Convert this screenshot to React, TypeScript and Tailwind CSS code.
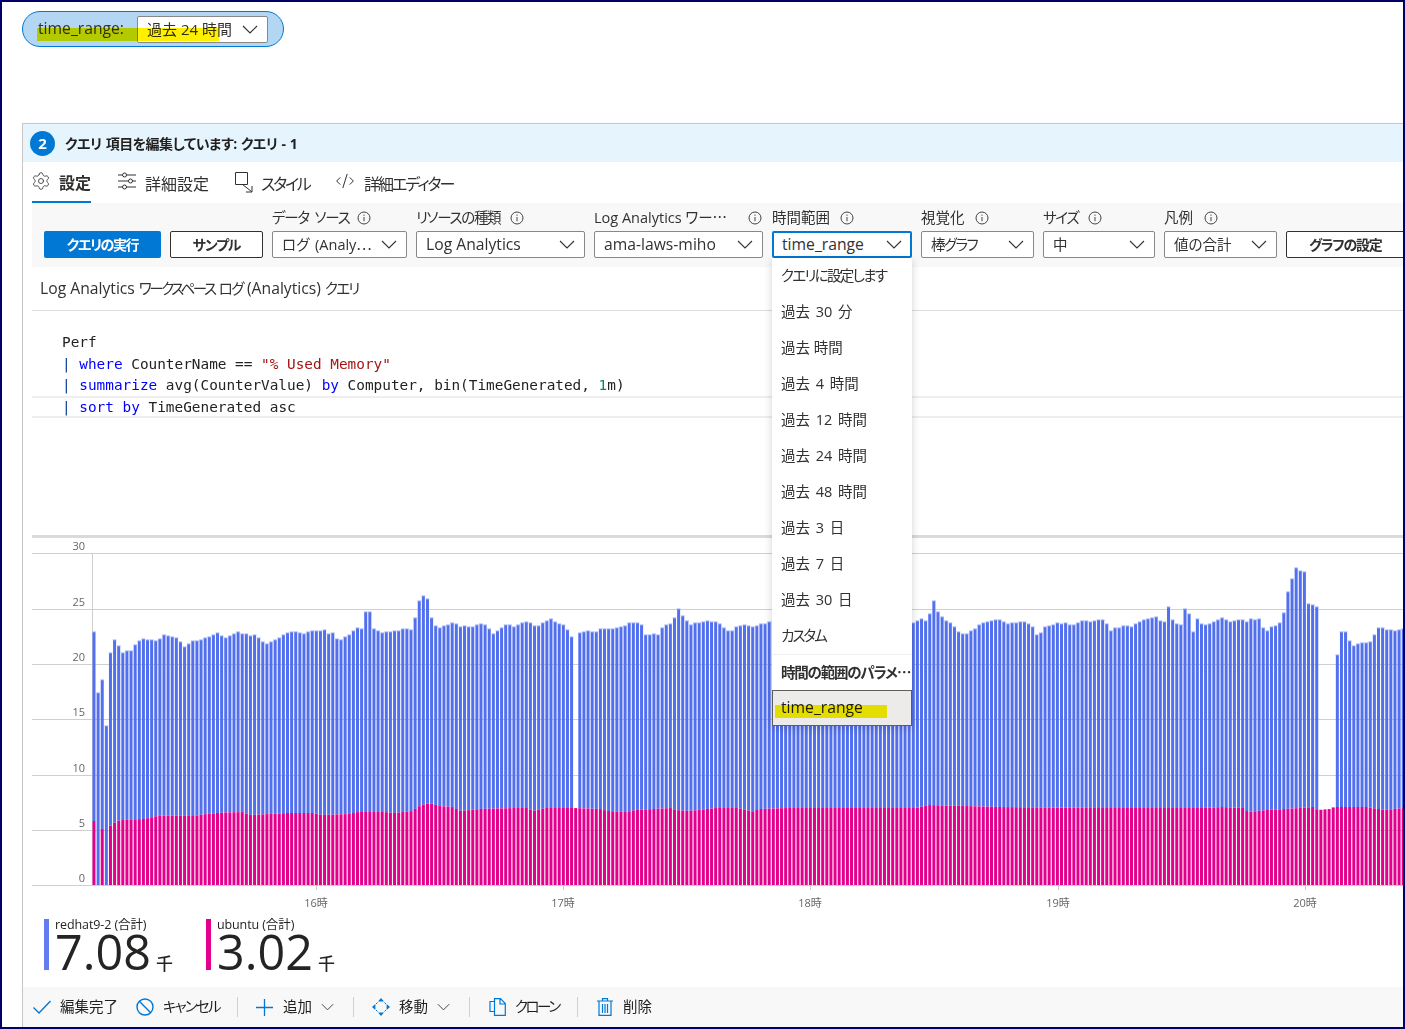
import { Settings, CodeXml } from 'lucide-react';

// bar tops read off the chart, 900 means no blue part for that slot
const BLUE_TOPS = [
  632, 693, 680, 726, 653, 640, 646, 653, 651, 651, 645, 641, 639, 640, 640, 641, 639, 635, 636, 637,
  638, 642, 647, 644, 641, 641, 640, 638, 637, 635, 633, 636, 638, 636, 634, 632, 634, 634, 636, 635,
  638, 642, 644, 642, 640, 638, 635, 633, 632, 632, 633, 634, 632, 631, 631, 631, 630, 634, 633, 639,
  640, 637, 635, 631, 628, 629, 612, 612, 629, 631, 633, 632, 632, 631, 631, 629, 629, 630, 618, 601,
  596, 599, 618, 626, 628, 626, 625, 623, 624, 627, 626, 627, 627, 625, 624, 625, 629, 634, 631, 628,
  625, 625, 627, 625, 623, 622, 623, 626, 626, 623, 621, 619, 622, 624, 625, 630, 637, 900, 633, 632,
  631, 632, 632, 629, 629, 629, 629, 628, 627, 626, 623, 623, 623, 625, 635, 635, 634, 635, 628, 625,
  624, 618, 609, 616, 621, 625, 623, 623, 622, 621, 622, 622, 624, 628, 631, 631, 627, 626, 625, 626,
  627, 626, 624, 624, 622,
  // under the dropdown
  622, 622, 623, 623, 624, 624, 623, 622, 622, 621, 622, 623, 624, 624, 623, 622, 622, 621, 621, 622,
  623, 624, 624, 623, 623, 622, 622, 623, 624, 624, 623, 623, 623, 622,
  623, 621, 619, 621, 614, 601, 612, 617, 621, 623, 627, 632, 634, 634, 631, 629, 625, 623, 622, 621,
  620, 620, 622, 624, 623, 623, 622, 622, 624, 627, 635, 633, 627, 626, 625, 623, 624, 623, 625, 625,
  623, 621, 621, 622, 621, 620, 620, 624, 631, 628, 628, 626, 626, 627, 624, 622, 620, 619, 618, 617,
  621, 622, 607, 620, 624, 625, 609, 614, 632, 619,
  624, 625, 624, 622, 620, 618, 620, 622, 621, 620, 620, 622, 619, 620, 619, 628, 631, 627, 626, 623,
  613, 592, 579, 568, 571, 572, 604, 605, 607, 900, 900, 900, 900, 655, 632, 632, 641, 646, 644, 643,
  643, 642, 635, 628, 628, 630, 630, 631, 630, 629,
];

const PINK_LINE: [number, number][] = [
  [94, 821], [102, 829], [110, 826], [117, 821], [126, 819.5], [144, 819], [157, 816], [166, 815.5], [193, 816],
  [206, 814], [224, 812.5], [242, 812], [251, 815], [269, 814], [287, 813], [313, 813], [322, 815], [349, 814],
  [358, 812], [385, 812], [394, 813], [412, 811], [421, 805], [430, 803], [439, 806], [452, 807], [461, 811],
  [479, 809], [515, 808], [528, 808], [533, 811], [546, 808], [573, 808], [600, 809], [608, 811], [626, 812],
  [635, 810], [671, 808], [676, 810], [689, 811], [698, 810], [716, 808], [738, 808], [747, 810], [752, 811.5],
  [760, 809], [787, 808], [915, 808], [930, 805], [1000, 807], [1100, 808], [1202, 808], [1223, 807], [1243, 808],
  [1248, 812], [1267, 810], [1285, 809], [1313, 807], [1318, 810], [1330, 809], [1334, 807], [1367, 807],
  [1384, 810], [1404, 808],
];

const GRID_LINES = [
  { y: 553, label: '30', labelY: 550 },
  { y: 609, label: '25', labelY: 606 },
  { y: 664, label: '20', labelY: 661 },
  { y: 719, label: '15', labelY: 716 },
  { y: 775, label: '10', labelY: 772 },
  { y: 830, label: '5', labelY: 827 },
  { y: 885, label: '0', labelY: 882 },
];

const HOURS = [
  { x: 316, label: '16時' },
  { x: 563, label: '17時' },
  { x: 810, label: '18時' },
  { x: 1058, label: '19時' },
  { x: 1305, label: '20時' },
];

const RANGE_OPTIONS = [
  { label: 'クエリに設定します', cls: 'tracking-[-1.7px]' },
  { label: '過去 30 分', cls: '[word-spacing:2px]' },
  { label: '過去 時間', cls: '' },
  { label: '過去 4 時間', cls: '[word-spacing:2px]' },
  { label: '過去 12 時間', cls: '[word-spacing:2px]' },
  { label: '過去 24 時間', cls: '[word-spacing:2px]' },
  { label: '過去 48 時間', cls: '[word-spacing:2px]' },
  { label: '過去 3 日', cls: '[word-spacing:2px]' },
  { label: '過去 7 日', cls: '[word-spacing:2px]' },
  { label: '過去 30 日', cls: '[word-spacing:2px]' },
  { label: 'カスタム', cls: 'tracking-[-2px]' },
];

function pinkTop(x: number) {
  for (let i = 1; i < PINK_LINE.length; i++) {
    const [x0, y0] = PINK_LINE[i - 1];
    const [x1, y1] = PINK_LINE[i];
    if (x <= x1) return y0 + ((y1 - y0) * (x - x0)) / (x1 - x0);
  }
  return 808;
}

function Chevron({ className = 'w-[16px] h-[9px]' }: { className?: string }) {
  return (
    <svg viewBox="0 0 16 9" className={`shrink-0 ${className}`} fill="none" stroke="#323130" strokeWidth="1.1">
      <path d="M1 1l7 7 7-7" />
    </svg>
  );
}

function InfoIcon() {
  return (
    <svg viewBox="0 0 14 14" className="w-[14px] h-[14px] shrink-0" fill="none" stroke="#444" strokeWidth="1">
      <circle cx="7" cy="7" r="6" />
      <path d="M7 6v4.200M7 3.600v1.200" />
    </svg>
  );
}

type FieldProps = {
  label: string;
  value: string;
  width: string;
  gap: string;
  labelClass?: string;
  valueClass?: string;
};

function Field({ label, value, width, gap, labelClass = '', valueClass = 'text-[15.7px]' }: FieldProps) {
  return (
    <div className={`${width} shrink-0 flex flex-col`}>
      <div className={`h-[23px] pb-[4px] flex items-center ${gap} text-[14.5px] text-[#323130] whitespace-nowrap`}>
        <span className={labelClass}>{label}</span>
        <InfoIcon />
      </div>
      <div className={`${width} h-[27px] flex items-center justify-between bg-white border border-[#8a8886] rounded-[2px] pl-[9px] pr-[9px] text-[#323130] whitespace-nowrap`}>
        <span className={valueClass}>{value}</span>
        <Chevron />
      </div>
    </div>
  );
}

function TimeRangeField() {
  return (
    <div className="relative w-[140px] shrink-0 flex flex-col">
      <div className="h-[23px] pb-[4px] flex items-center gap-[10px] text-[14.5px] text-[#323130] whitespace-nowrap">
        <span>時間範囲</span>
        <InfoIcon />
      </div>
      <div className="w-[140px] h-[27px] flex items-center justify-between bg-white border-2 border-[#0078d4] rounded-[2px] pl-[8px] pr-[8px] text-[15.7px] text-[#323130]">
        <span>time_range</span>
        <Chevron />
      </div>
      <div className="absolute z-10 left-0 top-[50px] w-[140px] bg-white shadow-[0_2px_8px_rgba(0,0,0,0.18)] text-[14.5px] text-[#323130]">
        {RANGE_OPTIONS.map((o) => (
          <div key={o.label} className="h-[36px] flex items-center px-[9px] whitespace-nowrap">
            <span className={o.cls}>{o.label}</span>
          </div>
        ))}
        <div className="h-[36px] flex items-center pl-[9px] border-t border-[#f0f0f0] font-bold text-[#323130] whitespace-nowrap tracking-[-1.2px]">
          時間の範囲のパラメ⋯
        </div>
        <div className="relative h-[36px] flex items-center pl-[8px] bg-[#edebe9] border border-[#605e5c] text-[15.7px] text-[#201f1e]">
          time_range
          <span className="absolute left-[2px] top-[14px] w-[112px] h-[13px] bg-[#f5f000] mix-blend-multiply" />
        </div>
      </div>
    </div>
  );
}

function BarChart() {
  return (
    <svg viewBox="32 538 1371 377" className="block w-[1371px] h-[377px]">
      {GRID_LINES.map((g) => (
        <g key={g.y}>
          <line x1="32" x2="1403" y1={g.y + 0.5} y2={g.y + 0.5} stroke="#cfcfcf" />
          <text x="85" y={g.labelY} textAnchor="end" fontSize="11" fill="#666">
            {g.label}
          </text>
        </g>
      ))}
      <line x1="92.5" x2="92.5" y1="553" y2="885" stroke="#cfcfcf" />
      {HOURS.map((h) => (
        <g key={h.x}>
          <line x1={h.x + 0.5} x2={h.x + 0.5} y1="885" y2="890" stroke="#cfcfcf" />
          <text x={h.x} y="907" textAnchor="middle" fontSize="11" fill="#666">
            {h.label}
          </text>
        </g>
      ))}
      {BLUE_TOPS.map((top, i) => {
        const cx = 94 + i * 4.117;
        const x = cx - 1.5;
        const pt = i === 1 || i === 3 ? 885 : pinkTop(cx);
        return (
          <g key={i}>
            {top < pt && <rect x={x} y={top} width="3" height={pt - top} fill="#5270ee" />}
            {top < pt && <rect x={x - 0.4} y={top - 0.6} width="3.800" height="1" fill="#a9b8f6" />}
            {pt < 885 && <rect x={x} y={pt} width="3" height={885 - pt} fill="#e3008c" />}
          </g>
        );
      })}
    </svg>
  );
}

function LegendItem({ color, name, value }: { color: string; name: string; value: string }) {
  return (
    <div className="flex gap-[6px]">
      <div className={`w-[5px] h-[51px] ${color}`} />
      <div className="flex flex-col text-[#252423]">
        <span className="h-[14px] text-[12.5px] leading-[12px] whitespace-nowrap tracking-[-0.1px]">{name}</span>
        <div className="flex items-baseline gap-[5px]">
          <span className="text-[48.5px] leading-[37px]">{value}</span>
          <span className="text-[17px] leading-none font-medium">千</span>
        </div>
      </div>
    </div>
  );
}

function Sep() {
  return <div className="w-px h-[20px] bg-[#d2d0ce]" />;
}

export default function App() {
  return (
    <div className="w-[1405px] h-[1029px] overflow-hidden bg-white border-2 border-[#000066] font-['Open_Sans','Noto_Sans_CJK_JP',sans-serif] [font-feature-settings:'palt'] text-[15.7px] text-[#323130]">
      {/* parameter pill */}
      <div className="relative mt-[9px] ml-[20px] w-[262px] h-[36px] flex items-center rounded-full bg-[#b3d6f2] border border-[#0078d4] pl-[15px]">
        <span className="w-[99px]">time_range:</span>
        <div className="w-[131px] h-[27px] flex items-center justify-between bg-white border border-[#8a8886] rounded-[2px] pl-[9px] pr-[9px]">
          <span className="whitespace-nowrap text-[15px]">過去 24 時間</span>
          <Chevron />
        </div>
        <span className="absolute left-[14px] top-[16px] w-[182px] h-[13px] bg-[#fff000] mix-blend-multiply" />
      </div>

      {/* editor panel */}
      <div className="mt-[76px] ml-[20px] border-l border-t border-[#c8c6c4]">
        <div className="h-[38px] flex items-center bg-[#e6f4fd] pl-[7px] gap-[10px]">
          <div className="w-[25px] h-[25px] rounded-full bg-[#0078d4] flex items-center justify-center text-white font-bold text-[15px]">2</div>
          <span className="font-bold text-[14px] text-[#201f1e] tracking-[-0.5px] [word-spacing:1px]">クエリ 項目を編集しています: クエリ - 1</span>
        </div>

        <div className="h-[41px] flex ml-[9px] text-[16px]">
          <div className="w-[59px] h-[41px] flex items-center gap-[8px] border-b-[2px] border-[#0078d4]">
            <Settings className="w-[20px] h-[20px] -ml-[1px] -mt-[2px] shrink-0" strokeWidth={1} color="#323130" />
            <span className="font-bold text-[16px] whitespace-nowrap mt-[2px]">設定</span>
          </div>
          <div className="ml-[27px] flex items-center gap-[9px]">
            <svg viewBox="0 0 18 18" className="w-[18px] h-[18px] -mt-[3px]" fill="none" stroke="#323130" strokeWidth="1">
              <path d="M0 3h4.500M8.500 3H18M0 9h10.500M14.500 9H18M0 15h4.500M8.500 15H18" />
              <circle cx="6.500" cy="3" r="2" />
              <circle cx="12.500" cy="9" r="2" />
              <circle cx="6.500" cy="15" r="2" />
            </svg>
            <span className="whitespace-nowrap w-[63px] mt-[2px]">詳細設定</span>
          </div>
          <div className="ml-[27px] flex items-center gap-[8px]">
            <svg viewBox="0 0 18 22" className="w-[18px] h-[22px] -mt-[2px]" fill="none" stroke="#323130" strokeWidth="1">
              <path d="M.5 1.500h12v12H.5zM7.500 13.500l9 7M17 15v6h-6" />
            </svg>
            <span className="whitespace-nowrap w-[48px] mt-[2px] tracking-[-2.2px]">スタイル</span>
          </div>
          <div className="ml-[27px] flex items-center gap-[9px]">
            <CodeXml className="w-[20px] h-[20px] -ml-[1px] -mt-[3px]" strokeWidth={1.100} color="#201f1e" />
            <span className="whitespace-nowrap mt-[2px] tracking-[-2px]">詳細エディター</span>
          </div>
        </div>

        {/* query settings bar */}
        <div className="h-[64px] ml-[9px] bg-[#f8f8f8] flex items-start gap-[9px] pl-[12px] pt-[5px]">
          <div className="w-[117px] shrink-0 h-[27px] mt-[23px] rounded-[2px] bg-[#0078d4] text-white font-bold text-[14px] tracking-[-1.4px] flex items-center justify-center">クエリの実行</div>
          <div className="w-[93px] shrink-0 h-[27px] mt-[23px] rounded-[2px] bg-white border border-[#323130] font-bold text-[14px] tracking-[-1.2px] flex items-center justify-center">サンプル</div>
          <Field label="データ ソース" labelClass="tracking-[-1.2px] [word-spacing:3px]" value="ログ (Analy⋯" valueClass="text-[14.5px] [word-spacing:2px]" width="w-[135px]" gap="gap-[8px]" />
          <Field label="リソースの種類" labelClass="tracking-[-1.3px]" value="Log Analytics" width="w-[169px]" gap="gap-[10px]" />
          <Field label="Log Analytics ワー⋯" value="ama-laws-miho" width="w-[169px]" gap="gap-[21px]" />
          <TimeRangeField />
          <Field label="視覚化" value="棒グラフ" valueClass="text-[14.5px] tracking-[-1.5px]" width="w-[113px]" gap="gap-[10px]" />
          <Field label="サイズ" labelClass="tracking-[-1.3px]" value="中" valueClass="text-[14.5px]" width="w-[112px]" gap="gap-[9px]" />
          <Field label="凡例" value="値の合計" valueClass="text-[14.5px]" width="w-[113px]" gap="gap-[11px]" />
          <div className="w-[130px] shrink-0 h-[27px] mt-[23px] rounded-[2px] bg-white border border-[#323130] font-bold text-[14px] tracking-[-1.3px] flex items-center pl-[22px] whitespace-nowrap">グラフの設定</div>
        </div>

        <div className="h-[44px] ml-[9px] pt-[1px] flex items-center pl-[8px] border-b border-[#dcdcdc]">
          <span className="whitespace-pre">
            Log Analytics <span className="text-[14.5px] tracking-[-2.5px]">ワークスペース</span> <span className="text-[14.5px] tracking-[-1.5px]">ログ</span> (Analytics) <span className="text-[14.5px] tracking-[-1.8px]">クエリ</span>
          </span>
        </div>

        {/* KQL */}
        <div className="h-[224px] ml-[9px] pt-[21px] font-['DejaVu_Sans_Mono',monospace] text-[14.38px] leading-[21.5px] text-[#222] whitespace-pre">
          <div className="pl-[30px]">Perf</div>
          <div className="pl-[30px]">
            <span className="text-[#0b3d91]">| </span>
            <span className="text-[#0000ff]">where</span> CounterName == <span className="text-[#a31515]">"% Used Memory"</span>
          </div>
          <div className="pl-[30px]">
            <span className="text-[#0b3d91]">| </span>
            <span className="text-[#0000ff]">summarize</span> avg(CounterValue) <span className="text-[#0000ff]">by</span> Computer, bin(TimeGenerated, <span className="text-[#098658]">1</span>m)
          </div>
          <div className="pl-[30px] mt-[1px] h-[18.5px] leading-[19px] shadow-[0_-2px_0_#eeeeee,0_2px_0_#eeeeee]">
            <span className="text-[#0b3d91]">| </span>
            <span className="text-[#0000ff]">sort by</span> TimeGenerated asc
          </div>
        </div>

        <div className="ml-[9px] border-t-[3px] border-[#dadada]">
          <BarChart />
        </div>

        <div className="h-[72px] ml-[21px] pt-[4px] flex gap-[33px]">
          <LegendItem color="bg-[#637cef]" name="redhat9-2 (合計)" value="7.08" />
          <LegendItem color="bg-[#e3008c]" name="ubuntu (合計)" value="3.02" />
        </div>

        {/* edit actions */}
        <div className="h-[40px] bg-[#f8f8f8] flex items-center pl-[10px] text-[14.5px] text-[#201f1e] whitespace-nowrap">
          <svg viewBox="0 0 18 14" className="w-[18px] h-[14px]" fill="none" stroke="#0078d4" strokeWidth="1.400">
            <path d="M.5 7.500l5.500 5.500L17.500 1" />
          </svg>
          <span className="ml-[9px] w-[58px]">編集完了</span>
          <svg viewBox="0 0 18 18" className="w-[18px] h-[18px] ml-[18px]" fill="none" stroke="#0078d4" strokeWidth="1.400">
            <circle cx="9" cy="9" r="8" />
            <path d="M3.300 3.300l11.400 11.400" />
          </svg>
          <span className="ml-[9px] w-[56px] tracking-[-1.800px]">キャンセル</span>
          <div className="ml-[18px]"><Sep /></div>
          <svg viewBox="0 0 17 17" className="w-[17px] h-[17px] ml-[18px]" fill="none" stroke="#0078d4" strokeWidth="1.300">
            <path d="M8.500 0v17M0 8.500h17" />
          </svg>
          <span className="ml-[10px] w-[30px]">追加</span>
          <Chevron className="w-[13px] h-[8px] ml-[8px]" />
          <div className="ml-[19px]"><Sep /></div>
          <svg viewBox="0 0 18 18" className="w-[18px] h-[18px] ml-[18px]" fill="#0078d4">
            <path d="M9 0l3 3.400H6zM9 18l-3-3.400h6zM0 9l3.400-3v6zM18 9l-3.400 3V6z" />
            <path d="M5.500 4.500L4 6M12.500 4.500L14 6M5.500 13.500L4 12M12.500 13.500L14 12" stroke="#0078d4" fill="none" />
          </svg>
          <span className="ml-[9px] w-[29px]">移動</span>
          <Chevron className="w-[13px] h-[8px] ml-[9px]" />
          <div className="ml-[19px]"><Sep /></div>
          <svg viewBox="0 0 17 18" className="w-[17px] h-[18px] ml-[19px]" fill="none" stroke="#0078d4" strokeWidth="1.200">
            <path d="M5.500 3.500H1v10h4.500" />
            <path d="M5.500.7h6l4.800 4.800v11.800H5.500zM11 .7v5.300h5.300" />
          </svg>
          <span className="ml-[9px] w-[44px] tracking-[-2.500px]">クローン</span>
          <div className="ml-[18px]"><Sep /></div>
          <svg viewBox="0 0 16 18" className="w-[16px] h-[18px] ml-[19px]" fill="none" stroke="#0078d4" strokeWidth="1.200">
            <path d="M0 3h16M5.500 3V.7h5V3M2 3v14.400h12V3M5.500 6v9M8 6v9M10.500 6v9" />
          </svg>
          <span className="ml-[10px]">削除</span>
        </div>
      </div>
    </div>
  );
}
